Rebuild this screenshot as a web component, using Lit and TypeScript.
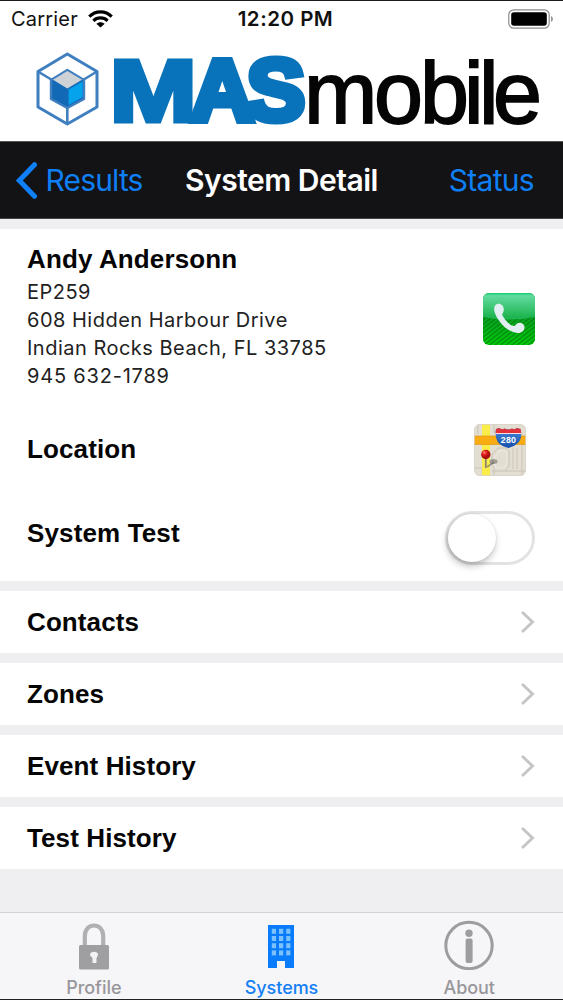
import { LitElement, html, css, svg } from "lit";
import { customElement, property } from "lit/decorators.js";

@customElement("status-bar")
class StatusBar extends LitElement {
  static styles = css`
    :host { display: grid; grid-template-columns: 1fr auto 1fr; align-items: center; height: 36px; border-top: 1px solid #1c1a20; font: 400 20px/36px Inter, sans-serif; color: #111; background: #fff; }
    .left { display: flex; align-items: center; gap: 10px; padding-left: 11px; letter-spacing: 0.2px; }
    .time { font-weight: 600; font-size: 20.5px; letter-spacing: 0.5px; padding-left: 8px; }
    .right { display: flex; justify-content: flex-end; padding-right: 9px; }
    svg { display: block; }
  `;
  render() {
    return html`
      <div class="left"><span>Carrier</span>
        <svg width="25" height="18" viewBox="0 0 25 18" fill="none" stroke="#000" stroke-width="3.2">
          <path d="M1.3 6.6C7.5 0.2 17.5 0.2 23.7 6.6" />
          <path d="M5.4 10.8C9.3 7 15.7 7 19.6 10.8" />
          <path d="M12.5 17.6L8.3 13.7C10.7 11.6 14.3 11.6 16.7 13.7Z" fill="#000" stroke="none" />
        </svg>
      </div>
      <span class="time">12:20 PM</span>
      <div class="right">
        <svg width="46" height="20" viewBox="0 0 46 20">
          <rect x="0.8" y="0.8" width="40.4" height="18.4" rx="5" fill="#fff" stroke="#8c8c8c" stroke-width="1.2" />
          <rect x="3.2" y="3.2" width="35.6" height="13.6" rx="2.8" fill="#000" />
          <path d="M43 7c2.6.8 2.6 5.2 0 6z" fill="#999" />
        </svg>
      </div>`;
  }
}

@customElement("brand-logo")
class BrandLogo extends LitElement {
  static styles = css`
    :host { display: block; height: 104px; background: #fff; }
    svg { display: block; overflow: visible; }
    .mas { font: 700 88px "Liberation Sans", Arial, sans-serif; fill: #0872ba; stroke: #0872ba; stroke-width: 5px; }
    .wide { stroke-width: 7px; }
    .mobile { font: 400 88px "Liberation Sans", Arial, sans-serif; fill: #050505; stroke: #050505; stroke-width: 1.8px; }
  `;
  render() {
    return html`
      <svg width="563" height="104" viewBox="0 37 563 104">
        <g stroke="#3f7fc0" stroke-linejoin="round">
          <path d="M67.3 54L97 71.5V107L67.3 124L38 107V71.5Z" fill="#fff" stroke-width="3" />
          <path d="M38 71.5L52 80M97 71.5L83 80M67.3 107V124" stroke-width="2.6" fill="none" />
          <path d="M67.3 70L84 80V99L67.3 108L51 99V80Z" fill="#1269b5" stroke-width="2.4" />
          <path d="M67.3 71L82 79.7L67.3 88.500L53 79.7Z" fill="#ced2d7" stroke="none" />
          <path d="M68.6 89.5L82.6 81.5V97L68.6 105Z" fill="#06a3ed" stroke="none" />
        </g>
        <text class="mas" transform="translate(110 120.800) scale(1.18 1)">M</text>
        <text class="mas wide" x="190.500 246.500" y="120.300">AS</text>
        <text class="mobile" x="304 374 420 464 479 493" y="123.300">mobile</text>
      </svg>`;
  }
}

@customElement("nav-bar")
class NavBar extends LitElement {
  static styles = css`
    :host { display: grid; grid-template-columns: 1fr auto 1fr; align-items: center; height: 78px; box-sizing: border-box; background: #131214; border-top: 1px solid #555; border-bottom: 1px solid #444; font: 400 30px/40px Inter, sans-serif; color: #0f7ff5; }
    .back { display: flex; align-items: center; gap: 9px; padding-left: 14.5px; letter-spacing: -0.85px; }
    .title { color: #fff; font-weight: 600; letter-spacing: -0.5px; }
    .action { text-align: right; padding-right: 29px; letter-spacing: -0.7px; }
    svg { display: block; }
  `;
  render() {
    return html`
      <div class="back">
        <svg width="22" height="37" viewBox="0 0 22 37" fill="none" stroke="#0f80fa" stroke-width="5" stroke-linecap="round" stroke-linejoin="miter"><path d="M19.5 2.7L4.3 18.5L19.5 34.3" /></svg>
        <span>Results</span>
      </div>
      <span class="title">System Detail</span>
      <span class="action">Status</span>`;
  }
}

@customElement("system-card")
class SystemCard extends LitElement {
  static styles = css`
    :host { display: block; height: 352px; box-sizing: border-box; background: #fff; padding: 15px 29px 0 27px; }
    .row { display: flex; justify-content: space-between; }
    .heading { font: 700 26px/30px "Liberation Sans", Arial, sans-serif; color: #050505; letter-spacing: 0.13px; }
    .contact { height: 162px; }
    .address { font: 400 20px/28px Inter, sans-serif; color: #222; letter-spacing: 0.49px; margin-top: 4px; }
    .number { letter-spacing: 0.8px; }
    .phone { margin: 48.5px -1px 0 0; }
    .location { height: 71px; margin-top: 15px; padding-top: 13px; }
    .map { margin: -10px 8px 0 0; }
    .test .heading { padding-top: 13px; }
    svg { display: block; }
    .switch { width: 90px; height: 54px; box-sizing: border-box; border: 3px solid #e3e2e5; border-radius: 27px; margin: 6px -0.5px 0 0; }
    .knob { width: 48px; height: 48px; border-radius: 50%; background: #fff; box-shadow: -1px 4px 7px rgba(0,0,0,.25), 0 0 2px rgba(0,0,0,.12); }
  `;
  render() {
    return html`
      <div class="row contact">
        <div>
          <div class="heading">Andy Andersonn</div>
          <div class="address">EP259<br />608 Hidden Harbour Drive<br />Indian Rocks Beach, FL 33785<br /><span class="number">945 632-1789</span></div>
        </div>
        <svg class="phone" width="52" height="52" viewBox="0 0 52 52">
          <defs>
            <linearGradient id="gloss" x2="0" y2="1"><stop offset="0" stop-color="#12c96c" /><stop offset=".1" stop-color="#62dba0" /><stop offset=".9" stop-color="#1fb550" /></linearGradient>
            <linearGradient id="base" x2="0" y2="1"><stop offset=".4" stop-color="#079d25" /><stop offset="1" stop-color="#00cf06" /></linearGradient>
            <pattern id="lines" width="3.4" height="3.4" patternUnits="userSpaceOnUse" patternTransform="rotate(-38)"><rect width="3.4" height="1.6" fill="#007510" opacity=".6" /></pattern>
          </defs>
          <rect width="52" height="52" rx="6" fill="url(#base)" />
          <rect width="52" height="52" rx="6" fill="url(#lines)" />
          <path d="M0 6a6 6 0 0 1 6-6h40a6 6 0 0 1 6 6v18Q26 29 0 24Z" fill="url(#gloss)" />
          <path d="M14 11C10.5 12.5 10.5 17 12.5 21.5C16.5 30.5 25 39 34.5 40C39 40.3 42 37 41.5 33.5C41 30.5 36.5 28.5 34 30.5C32.5 31.7 32.5 33.5 30 32.8C26 31.5 21.5 26.5 19.5 22.5C18.5 20.3 21 20 20.8 16C20.5 12.5 17.5 9.7 14 11Z" fill="#e2eff2" />
        </svg>
      </div>
      <div class="row location">
        <div class="heading">Location</div>
        <svg class="map" width="52" height="52" viewBox="0 0 52 52">
          <defs>
            <clipPath id="tile"><rect width="52" height="52" rx="6" /></clipPath>
            <clipPath id="shield"><path d="M22 5L25 4Q28 6 30.5 4.5Q34.5 6.5 38 4.5Q40.5 6 43 4L46.5 5Q49 14 44 19Q39.5 23 34.5 24Q28 22.5 24 18.5Q20.5 13 22 5Z" /></clipPath>
            <radialGradient id="pin" cx=".35" cy=".3"><stop offset="0" stop-color="#ff8a80" /><stop offset=".45" stop-color="#e5221c" /><stop offset="1" stop-color="#a90d0d" /></radialGradient>
            <linearGradient id="blue" x2="0" y2="1"><stop offset="0" stop-color="#4c8ee0" /><stop offset="1" stop-color="#134ba8" /></linearGradient>
          </defs>
          <g clip-path="url(#tile)">
            <rect width="52" height="52" fill="#e3ded2" />
            <path d="M4 0V10M20 0V9M0 44H8V52M18 47H52M20 51V44L18 40V31L24 24H32L35 27V42L31 47M39 24V45M43 24V45M48 20V52" fill="none" stroke="#cbc4b7" />
            <path d="M21 43V33L25 27H31L33 29V41L29 44Z" fill="none" stroke="#eeeae1" />
            <rect x="8" width="8" height="52" fill="#faed49" />
            <rect y="12" width="52" height="8.5" fill="#f9ac12" />
            <path d="M0 12H52M0 20.5H52" stroke="#dd9817" stroke-width=".7" />
            <path d="M13 43L20 38" stroke="#77736b" stroke-width="1.8" opacity=".7" />
            <ellipse cx="19.5" cy="37.5" rx="4" ry="2.5" fill="#6b675f" opacity=".55" />
            <path d="M11.8 33V44" stroke="#8b8477" stroke-width="1.8" />
            <circle cx="11.8" cy="30.5" r="4.7" fill="url(#pin)" />
            <g clip-path="url(#shield)">
              <rect x="20" y="3" width="30" height="22" fill="url(#blue)" />
              <rect x="20" y="3" width="30" height="6" fill="#e23138" />
              <rect x="20" y="9" width="30" height="1" fill="#f5dfe2" />
            </g>
          </g>
          <rect x=".5" y=".5" width="51" height="51" rx="5.5" fill="none" stroke="#d6d2ca" stroke-width=".7" />
          <text x="34.5" y="18.8" text-anchor="middle" font-family="Liberation Sans, Arial, sans-serif" font-weight="700" font-size="8.8" letter-spacing=".3" fill="#fff">280</text>
        </svg>
      </div>
      <div class="row test">
        <div class="heading">System Test</div>
        <div class="switch"><div class="knob"></div></div>
      </div>`;
  }
}

@customElement("link-row")
class LinkRow extends LitElement {
  @property() label = "";
  static styles = css`
    :host { display: flex; align-items: center; justify-content: space-between; height: 62px; background: #fff; padding: 0 28px 0 27px; font: 700 26px/30px "Liberation Sans", Arial, sans-serif; color: #050505; letter-spacing: 0.1px; }
    svg { display: block; }
  `;
  render() {
    return html`<span>${this.label}</span>
      <svg width="14" height="24" viewBox="0 0 14 24" fill="none" stroke="#c6c6c8" stroke-width="3"><path d="M1 2L11.5 12L1 22" /></svg>`;
  }
}

@customElement("tab-bar")
class TabBar extends LitElement {
  static styles = css`
    :host { display: grid; grid-template-columns: repeat(3, 1fr); height: 88px; box-sizing: border-box; border-top: 1px solid #d2d1d4; border-bottom: 1px solid #222; background: #f6f5f8; font: 500 18px/22px Inter, sans-serif; color: #98979b; }
    .tab { display: flex; flex-direction: column; align-items: center; }
    .icon { height: 64px; display: flex; align-items: center; }
    .low { padding-top: 2px; height: 62px; }
    .active { color: #137ff5; }
    .tab span { letter-spacing: -0.05px; }
    svg { display: block; }
  `;
  render() {
    const windows = [0, 1, 2, 3].flatMap((r) => [0, 1, 2].map((c) =>
      svg`<rect x=${3.8 + c * 7.2} y=${3.8 + r * 7.2} width="4.2" height="5" fill="#7cc0ff" />`));
    return html`
      <div class="tab"><div class="icon low">
        <svg width="32" height="47" viewBox="0 0 32 47"><path d="M6.8 24V13C6.8-1 25.2-1 25.2 13V24" fill="none" stroke="#b0afb1" stroke-width="4.2" /><rect x="1" y="22" width="30" height="24.5" rx="1.5" fill="#9f9ea1" /><path d="M12 31.5C12 27.8 20 27.8 20 31.5C20 33.500 18.5 34.5 18.5 35V40H14.5V35C14.5 34.5 12 33.5 12 31.5Z" fill="#f2f1f4" /></svg>
      </div><span>Profile</span></div>
      <div class="tab active"><div class="icon low">
        <svg width="26" height="43" viewBox="0 0 26 43"><path d="M0 0H26V43H17V36H9V43H0Z" fill="#087cfb" />${windows}</svg>
      </div><span>Systems</span></div>
      <div class="tab"><div class="icon">
        <svg width="50" height="50" viewBox="0 0 50 50"><circle cx="25" cy="25.5" r="23.2" fill="none" stroke="#9d9c9f" stroke-width="3" /><circle cx="25" cy="13.2" r="3.7" fill="#9d9c9f" /><rect x="21.6" y="18.5" width="7" height="24.5" rx="2" fill="#9d9c9f" /></svg>
      </div><span>About</span></div>`;
  }
}

@customElement("app-root")
class AppRoot extends LitElement {
  static styles = css`
    :host { display: flex; flex-direction: column; width: 563px; height: 1000px; overflow: hidden; background: #efeef1; }
    .content { flex: 1; display: flex; flex-direction: column; gap: 10px; padding-top: 10px; }
  `;
  render() {
    return html`
      <status-bar></status-bar>
      <brand-logo></brand-logo>
      <nav-bar></nav-bar>
      <div class="content">
        <system-card></system-card>
        ${["Contacts", "Zones", "Event History", "Test History"].map((l) => html`<link-row label=${l}></link-row>`)}
      </div>
      <tab-bar></tab-bar>`;
  }
}
